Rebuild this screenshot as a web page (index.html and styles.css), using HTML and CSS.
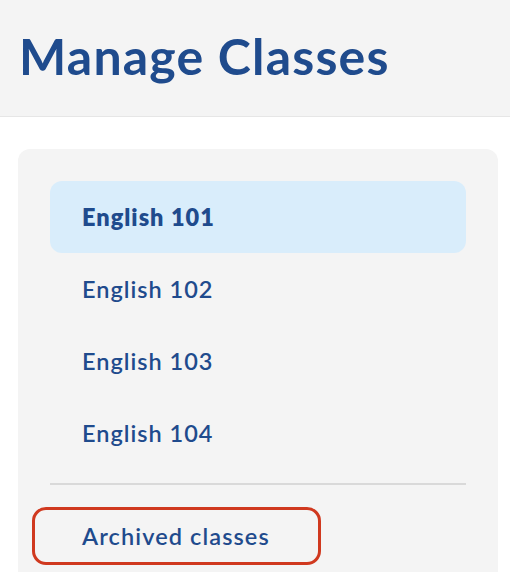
FILE: index.html
```html
<!DOCTYPE html>
<html lang="en">
<head>
<meta charset="utf-8">
<title>Manage Classes</title>
<link rel="stylesheet" href="styles.css">
</head>
<body>
<header class="page-header">
  <h1 class="title">Manage Classes</h1>
</header>
<main class="content">
  <nav class="card">
    <ul class="class-list">
      <li class="class-item active">English 101</li>
      <li class="class-item">English 102</li>
      <li class="class-item">English 103</li>
      <li class="class-item">English 104</li>
    </ul>
    <hr class="divider">
    <a class="archived" href="#">Archived classes</a>
  </nav>
</main>
</body>
</html>
```

FILE: styles.css
```css
* { box-sizing: border-box; }
html, body {
  margin: 0;
  padding: 0;
  background: #ffffff;
  font-family: "Lato", "Noto Sans", sans-serif;
  color: #1f4b8d;
  overflow: hidden;
}
.page-header {
  height: 117px;
  background: #f4f4f4;
  border-bottom: 1px solid #e6e6e6;
  display: flex;
  align-items: center;
  padding-left: 19px;
}
.title {
  margin: 0;
  font-size: 50px;
  font-weight: 700;
  letter-spacing: 1.2px;
  line-height: 1;
  color: #1f4b8d;
  padding-bottom: 4px;
}
.content {
  padding: 32px 12px 0 18px;
}
.card {
  background: #f4f4f4;
  border-radius: 12px;
  padding: 32px 32px 40px;
  min-height: 460px;
}
.class-list {
  list-style: none;
  margin: 0;
  padding: 0;
}
.class-item {
  height: 72px;
  display: flex;
  align-items: center;
  padding-left: 32px;
  font-size: 23.5px;
  font-weight: 600;
  letter-spacing: 1px;
  border-radius: 12px;
}
.class-item.active {
  background: #d9edfb;
  font-weight: 800;
}
.divider {
  border: 0;
  height: 2px;
  background: #d9d9d9;
  margin: 14px 0 0;
}
.archived {
  display: inline-flex;
  align-items: center;
  height: 58px;
  margin: 22px 0 0 -18px;
  padding: 0 48px 0 47px;
  border: 3px solid #d0391f;
  border-radius: 14px;
  color: #1f4b8d;
  text-decoration: none;
  font-size: 23.5px;
  font-weight: 600;
  letter-spacing: 1.1px;
}
```
